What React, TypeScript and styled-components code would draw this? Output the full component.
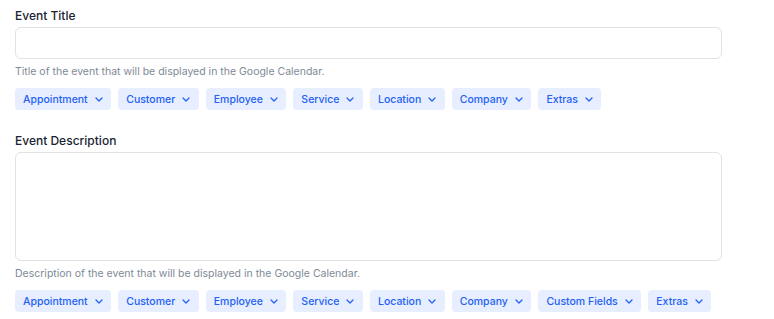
import React, { FC } from "react";
import styled, { createGlobalStyle } from "styled-components";

const GlobalStyle = createGlobalStyle`
  html, body {
    margin: 0;
    padding: 0;
    background: #ffffff;
  }

  body {
    font-family: Inter, "Noto Sans", sans-serif;
  }
`;

const firstTags = [
  "Appointment",
  "Customer",
  "Employee",
  "Service",
  "Location",
  "Company",
  "Extras"
];

const secondTags = [
  "Appointment",
  "Customer",
  "Employee",
  "Service",
  "Location",
  "Company",
  "Custom Fields",
  "Extras"
];

const Chevron: FC = () => (
  <svg width="8" height="5" viewBox="0 0 8 5" fill="none">
    <path
      d="M1 1L4 4L7 1"
      stroke="currentColor"
      strokeWidth="1.3"
      strokeLinecap="round"
      strokeLinejoin="round"
    />
  </svg>
);

interface IFieldProps {
  label: string;
  help: string;
  tags: string[];
  multiline?: boolean;
}

const Field: FC<IFieldProps> = ({ label, help, tags, multiline }) => (
  <Section>
    <Label>{label}</Label>
    {multiline ? <TextArea /> : <Input />}
    <Help>{help}</Help>
    <Tags>
      {tags.map(t => (
        <Tag key={t}>
          {t}
          <Chevron />
        </Tag>
      ))}
    </Tags>
  </Section>
);

/**
 * Google Calendar event settings
 */
export default function App() {
  return (
    <>
      <GlobalStyle />
      <Page>
        <Field
          label="Event Title"
          help="Title of the event that will be displayed in the Google Calendar."
          tags={firstTags}
        />
        <Field
          label="Event Description"
          help="Description of the event that will be displayed in the Google Calendar."
          tags={secondTags}
          multiline
        />
      </Page>
    </>
  );
}

const Page = styled.div`
  width: 707px;
  padding: 8px 0 0 15px;

  display: flex;
  flex-direction: column;
  gap: 23px;
`;

const Section = styled.div`
  display: flex;
  flex-direction: column;
`;

const Label = styled.div`
  font-size: 12px;
  font-weight: 500;
  line-height: 16px;
  color: #1a2433;
  margin-bottom: 3px;
`;

const Input = styled.div`
  height: 30px;

  border: 1px solid #dfe3e8;
  border-radius: 6px;
  background: #ffffff;
`;

const TextArea = styled(Input)`
  height: 107px;
`;

const Help = styled.div`
  margin-top: 6px;

  font-size: 10.5px;
  line-height: 14px;
  color: #808a96;
`;

const Tags = styled.div`
  margin-top: 9px;

  display: flex;
  flex-wrap: wrap;
  gap: 7px;
`;

const Tag = styled.div`
  height: 22px;
  padding: 0 8.5px 0 8px;

  display: flex;
  align-items: center;
  gap: 7px;

  border-radius: 4px;
  background: #e6eeff;

  font-size: 10.5px;
  font-weight: 500;
  color: #2461f2;

  svg {
    margin-top: 1px;
  }
`;
